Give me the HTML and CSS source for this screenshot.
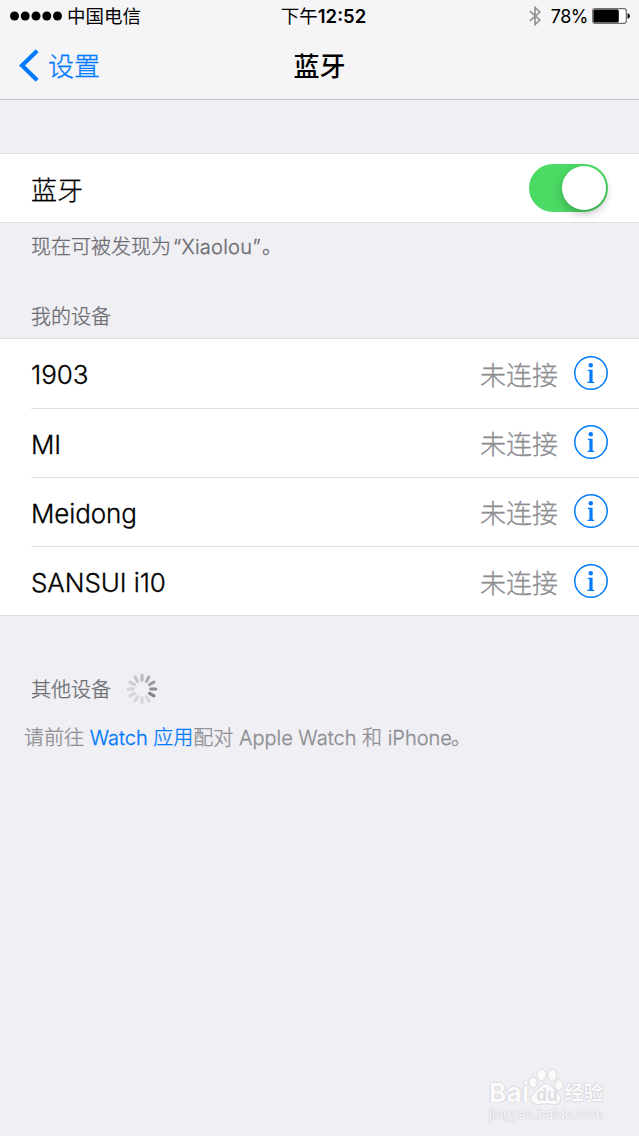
FILE: index.html
```html
<!DOCTYPE html>
<html lang="zh-CN">
<head>
  <meta charset="UTF-8" />
  <meta name="viewport" content="width=device-width, initial-scale=1" />
  <title>蓝牙</title>
  <link rel="stylesheet" href="styles.css">
</head>
<body>
  <header class="top-bar">
    <div class="status-bar">
      <div class="carrier">
        <svg class="signal" width="52" height="10" viewBox="0 0 52 10">
          <circle cx="4.5" cy="5" r="4.5" /><circle cx="15.2" cy="5" r="4.5" /><circle cx="26" cy="5" r="4.5" /><circle cx="36.8" cy="5" r="4.5" /><circle cx="47.5" cy="5" r="4.5" />
        </svg>
        <span>中国电信</span>
      </div>
      <div class="time">下午<b>12:52</b></div>
      <div class="power">
        <svg class="bt-icon" width="12" height="20" viewBox="0 0 12 20">
          <path d="M0.8 5.2 L10.8 14 L6 18.6 V1.4 L10.8 6 L0.8 14.8" />
        </svg>
        <span class="percent">78%</span>
        <svg class="battery" width="38" height="16" viewBox="0 0 38 16">
          <rect class="case" x="0.7" y="0.7" width="33.6" height="14.6" rx="2.2" />
          <rect x="1.4" y="1.4" width="25.4" height="13.2" rx="1.6" />
          <path d="M35.5 5.2 Q38 6 38 8 Q38 10 35.5 10.8 Z" />
        </svg>
      </div>
    </div>
    <nav class="nav-bar">
      <a class="back">
        <svg width="20" height="33" viewBox="0 0 20 33">
          <path d="M18.2 1.8 L3 16.5 L18.2 31.2" />
        </svg>
        <span>设置</span>
      </a>
      <h1>蓝牙</h1>
    </nav>
  </header>

  <main>
    <section class="group switch-group">
      <div class="row">
        <span class="name">蓝牙</span>
        <span class="toggle"><span class="knob"></span></span>
      </div>
    </section>
    <p class="note">现在可被发现为<span class="quoted">“Xiaolou”</span>。</p>

    <h2>我的设备</h2>
    <section class="group devices">
      <div class="row">
        <span class="name">1903</span>
        <span class="state">未连接</span>
        <svg class="info" viewBox="0 0 34 34"><circle class="ring" cx="17" cy="17" r="16.2" /><circle cx="16.8" cy="9.3" r="2.2" /><path d="M13.8 13.8 H18.6 V25.4 L20.2 25.9 V27 H13.5 V25.9 L15.4 25.4 V15.3 L13.8 14.8 Z" /></svg>
      </div>
      <div class="row">
        <span class="name">MI</span>
        <span class="state">未连接</span>
        <svg class="info" viewBox="0 0 34 34"><circle class="ring" cx="17" cy="17" r="16.2" /><circle cx="16.8" cy="9.3" r="2.2" /><path d="M13.8 13.8 H18.6 V25.4 L20.2 25.9 V27 H13.5 V25.9 L15.4 25.4 V15.3 L13.8 14.8 Z" /></svg>
      </div>
      <div class="row">
        <span class="name">Meidong</span>
        <span class="state">未连接</span>
        <svg class="info" viewBox="0 0 34 34"><circle class="ring" cx="17" cy="17" r="16.2" /><circle cx="16.8" cy="9.3" r="2.2" /><path d="M13.8 13.8 H18.6 V25.4 L20.2 25.9 V27 H13.5 V25.9 L15.4 25.4 V15.3 L13.8 14.8 Z" /></svg>
      </div>
      <div class="row">
        <span class="name">SANSUI i10</span>
        <span class="state">未连接</span>
        <svg class="info" viewBox="0 0 34 34"><circle class="ring" cx="17" cy="17" r="16.2" /><circle cx="16.8" cy="9.3" r="2.2" /><path d="M13.8 13.8 H18.6 V25.4 L20.2 25.9 V27 H13.5 V25.9 L15.4 25.4 V15.3 L13.8 14.8 Z" /></svg>
      </div>
    </section>

    <div class="searching">
      <h2>其他设备</h2>
      <svg class="spinner" width="32" height="32" viewBox="-16 -16 32 32">
        <path stroke="#b9b9bd" d="M0 -8.7 V-13.8" />
        <path stroke="#acacb0" transform="rotate(30)" d="M0 -8.7 V-13.8" />
        <path stroke="#9c9ca0" transform="rotate(60)" d="M0 -8.7 V-13.8" />
        <path stroke="#8c8c90" transform="rotate(90)" d="M0 -8.7 V-13.8" />
        <path stroke="#828286" transform="rotate(120)" d="M0 -8.7 V-13.8" />
        <path stroke="#d6d6da" transform="rotate(150)" d="M0 -8.7 V-13.8" />
        <path stroke="#d6d6da" transform="rotate(180)" d="M0 -8.7 V-13.8" />
        <path stroke="#d6d6da" transform="rotate(210)" d="M0 -8.7 V-13.8" />
        <path stroke="#d5d5d9" transform="rotate(240)" d="M0 -8.7 V-13.8" />
        <path stroke="#d3d3d7" transform="rotate(270)" d="M0 -8.7 V-13.8" />
        <path stroke="#cdcdd1" transform="rotate(300)" d="M0 -8.7 V-13.8" />
        <path stroke="#c4c4c8" transform="rotate(330)" d="M0 -8.7 V-13.8" />
      </svg>
    </div>
    <p class="hint">请前往 <a>Watch 应用</a>配对 Apple Watch 和 iPhone<span class="stop">。</span></p>
  </main>

  <div class="watermark">
    <div class="brand">
      <span class="bai">Bai</span>
      <span class="paw">
        <svg width="36" height="38" viewBox="0 0 34 38" preserveAspectRatio="none">
          <ellipse cx="4.8" cy="14.5" rx="4" ry="5.5" />
          <ellipse cx="12.8" cy="6.8" rx="4.3" ry="6" />
          <ellipse cx="23" cy="7.2" rx="4.3" ry="6" />
          <ellipse cx="29.2" cy="17" rx="4" ry="5.5" />
          <path d="M17 15.5 C22 15.5 23 20 27 23.5 C34 30 31 37 23 36.5 C18 35.5 15 35.5 11 36.5 C2 37 0 30 6 24.5 C11 20 12 15.5 17 15.5 Z" />
        </svg>
        <span class="du">du</span>
      </span>
      <span class="jingyan">经验</span>
    </div>
    <div class="site">jingyan.baidu.com</div>
  </div>
</body>
</html>
```
FILE: styles.css
```css
* {
  box-sizing: border-box;
}

body {
  margin: 0;
  height: 1136px;
  overflow: hidden;
  background: #efeff4;
  color: #000;
  font-family: Inter, "Noto Sans CJK SC", sans-serif;
  font-size: 26px;
  font-weight: 300;
  -webkit-text-stroke: 0.3px;
}

h1, h2, p {
  margin: 0;
  font-weight: 300;
}

.top-bar {
  height: 100px;
  background: #f5f5f7;
  border-bottom: 1px solid #c8c8cc;
}

.status-bar {
  display: grid;
  grid-template-columns: 1fr auto 1fr;
  align-items: center;
  height: 32px;
  padding: 0 10px;
  font-size: 18.5px;
  font-weight: 400;
  line-height: 32px;
  -webkit-text-stroke: 0;
}

.carrier {
  display: flex;
  align-items: center;
  gap: 5px;
}

.time {
  padding-left: 8px;
}

.time b {
  font-weight: 600;
}

.power {
  display: flex;
  align-items: center;
  justify-content: flex-end;
}

.bt-icon {
  fill: none;
  stroke: #8f8f92;
  stroke-width: 1.6;
}

.percent {
  margin: 0 4px 0 10px;
  padding-top: 2px;
  font-size: 18px;
  line-height: 30px;
  letter-spacing: -0.5px;
}

.battery {
  margin-right: -1px;
}

.battery .case {
  fill: #fff;
  stroke: #6f6f72;
  stroke-width: 1.2;
}

.nav-bar {
  display: grid;
  grid-template-columns: 1fr auto 1fr;
  align-items: center;
  height: 67px;
  padding: 0 19px;
}

.back {
  display: flex;
  align-items: center;
  gap: 9px;
  color: #007aff;
}

.back span, h1 {
  padding-bottom: 3px;
}

.back svg {
  fill: none;
  stroke: #007aff;
  stroke-width: 4.2;
}

h1 {
  font-size: 26px;
  font-weight: 500;
  -webkit-text-stroke: 0;
}

.group {
  background: #fff;
  border-top: 1px solid #dcdce0;
  border-bottom: 1px solid #dcdce0;
}

.switch-group {
  margin-top: 53px;
}

.row {
  display: flex;
  align-items: center;
  height: 69.2px;
  margin-left: 31px;
  padding-right: 31px;
  border-bottom: 1px solid #dfdfe2;
}

.row:last-child {
  border-bottom: 0;
  height: 68.4px;
}

.devices .row {
  padding-bottom: 1px;
}

.name {
  flex: 1;
  letter-spacing: -0.1px;
}

.devices .name {
  padding-top: 4px;
}

.state {
  padding-top: 1px;
  color: #8e8e93;
}

.info {
  width: 34px;
  height: 34px;
  margin-left: 16px;
  fill: #007aff;
}

.info .ring {
  fill: none;
  stroke: #007aff;
  stroke-width: 1.5;
}

.toggle {
  display: flex;
  justify-content: flex-end;
  width: 79px;
  height: 48px;
  padding: 2px;
  border-radius: 24px;
  background: #4cd964;
}

.knob {
  width: 44px;
  height: 44px;
  border-radius: 50%;
  background: #fff;
  box-shadow: 0 4px 8px rgba(0, 0, 0, 0.25);
}

.note, h2 {
  padding-left: 31px;
  font-size: 20px;
  line-height: 30px;
  color: #6d6d72;
}

.note {
  margin-top: 9px;
}

.quoted {
  margin: 0 1px 0 2px;
  letter-spacing: 0.25px;
}

h2 {
  margin: 40px 0 6px;
}

.searching {
  display: flex;
  align-items: center;
  gap: 15px;
  margin-top: 57px;
}

.searching h2 {
  margin: 0;
  padding-top: 2px;
}

.spinner {
  fill: none;
  stroke-width: 3;
  stroke-linecap: round;
}

.hint {
  margin-top: 18px;
  padding-left: 24px;
  font-size: 20px;
  line-height: 30px;
  color: #8e8e93;
}

.hint a {
  color: #007aff;
}

.hint .stop {
  margin-left: -1px;
}

/* logo in the bottom corner, over the page */
.watermark {
  position: absolute;
  right: 33px;
  bottom: 14px;
  width: 117px;
  color: #fbfbfc;
  text-shadow: 0 0 1px #b8b8c0, 0 0 2px #cfcfd5;
  -webkit-text-stroke: 0;
}

.brand {
  display: flex;
  align-items: flex-end;
  height: 40px;
  line-height: 28px;
}

.bai {
  font-size: 26px;
  font-weight: 700;
  letter-spacing: 0.3px;
}

.paw {
  position: relative;
  flex: none;
  height: 38px;
  margin: 0 0 1px -1px;
}

.paw svg {
  display: block;
  fill: #fafafb;
  stroke: #dcdce1;
}

.du {
  position: absolute;
  left: 8px;
  bottom: -3px;
  font-size: 17px;
  font-weight: 700;
  color: #dedee3;
  text-shadow: none;
}

.jingyan {
  flex: none;
  font-size: 19.5px;
  font-weight: 700;
}

.site {
  font-size: 13.2px;
  font-weight: 400;
  line-height: 15px;
}
```
